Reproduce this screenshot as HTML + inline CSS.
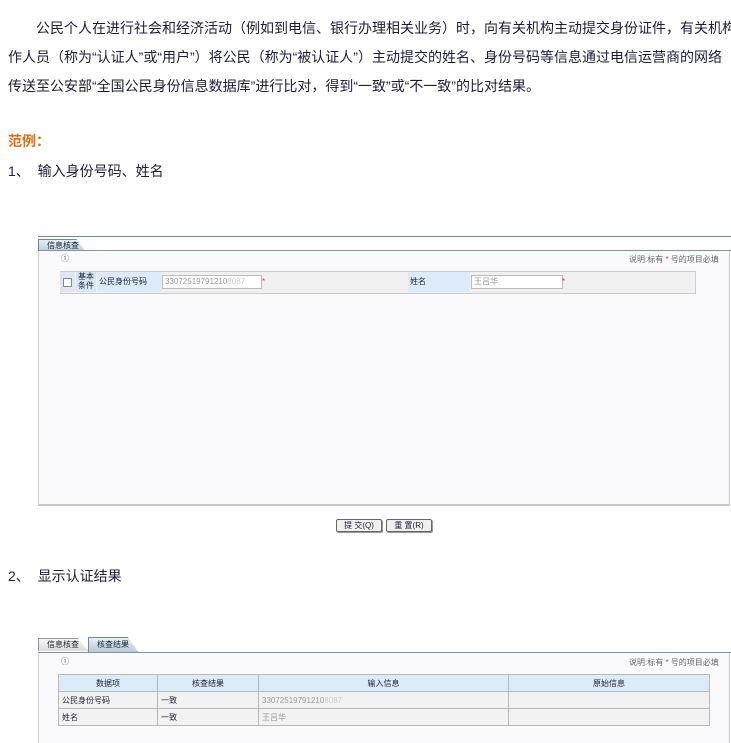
<!DOCTYPE html>
<html><head><meta charset="utf-8"><style>
body{margin:0;width:731px;height:737px;overflow:hidden;background:#fff;font-family:"Liberation Sans","Noto Sans CJK SC",sans-serif;position:relative;color:#1c1c3a}
.abs{position:absolute;white-space:nowrap}
.p{font-size:14px;left:8px}
.tab{position:absolute;height:12px;font-size:8px;line-height:12px;color:#123;border:1px solid #6d8aa0;border-bottom:none;background:linear-gradient(#e8eef3,#bccbd8);padding-left:8px}
.line{position:absolute;height:1px;background:#7a94a8}
.body{position:absolute;background:#fafafc;border:1px solid #ccc;border-top:none;border-bottom:2px solid #c8c8c8}
.s{font-size:8px;color:#555}
table{border-collapse:collapse;font-size:8px}
td{border:1px solid #b8b8b8;height:16px;padding:0 3px}
.btn{position:absolute;top:519px;height:11px;border:1px solid #666;border-radius:2px;background:#f0f0f0;font-size:8px;line-height:11px;text-align:center;box-shadow:1px 1px 0 #999}
</style></head><body>
<div class="abs p" style="top:18px;left:36px">公民个人在进行社会和经济活动（例如到电信、银行办理相关业务）时，向有关机构主动提交身份证件，有关机构</div>
<div class="abs p" style="top:47px">作人员（称为“认证人”或“用户”）将公民（称为“被认证人”）主动提交的姓名、身份号码等信息通过电信运营商的网络</div>
<div class="abs p" style="top:76px">传送至公安部“全国公民身份信息数据库”进行比对，得到“一致”或“不一致”的比对结果。</div>
<div class="abs" style="top:131px;left:8px;font-size:14px;font-weight:bold;color:#e86a10">范例：</div>
<div class="abs p" style="top:161px">1、&nbsp;&nbsp;输入身份号码、姓名</div>

<div class="line" style="top:236px;left:38px;width:693px;background:#6f8898"></div>
<div class="tab" style="top:239px;left:38px;width:38px;clip-path:polygon(0 0,80% 0,100% 100%,0 100%)">信息核查</div>
<div class="line" style="top:250px;left:38px;width:693px"></div>
<div class="body" style="top:251px;left:38px;width:690px;height:253px"></div>
<div class="abs s" style="top:253px;left:61px;color:#4466aa">①</div>
<div class="abs s" style="top:254px;left:629px;color:#666">说明:标有 <span style="color:#e33">*</span> 号的项目必填</div>
<div class="abs" style="top:271px;left:60px;width:634px;height:21px;background:#f0f0f0;border:1px solid #ccc"></div>
<div class="abs" style="top:272px;left:60px;width:15px;height:20px;background:#dde8f4"></div>
<div class="abs" style="top:278px;left:63px;width:7px;height:7px;border:1px solid #888;background:#fff"></div>
<div class="abs" style="top:272px;left:76px;width:20px;height:20px;background:#d8e6f4;font-size:8px;line-height:9px;text-align:center">基本<br>条件</div>
<div class="abs" style="top:272px;left:97px;width:62px;height:20px;background:#dcebfa;font-size:8px;line-height:20px;padding-left:2px">公民身份号码</div>
<div class="abs" style="top:275px;left:162px;width:96px;height:12px;background:#fff;border:1px solid #bbb;font-size:8px;line-height:12px;color:#999;padding-left:2px">33072519791210<span style="color:#ccc">8087</span></div>
<div class="abs" style="top:277px;left:262px;font-size:8px;color:#e33">*</div>
<div class="abs" style="top:272px;left:408px;width:60px;height:20px;background:#dcebfa;font-size:8px;line-height:20px;padding-left:2px">姓名</div>
<div class="abs" style="top:275px;left:471px;width:88px;height:12px;background:#fff;border:1px solid #bbb;font-size:8px;line-height:12px;color:#999;padding-left:2px">王吕华</div>
<div class="abs" style="top:277px;left:562px;font-size:8px;color:#e33">*</div>

<div class="btn" style="left:336px;width:44px">提 交(Q)</div>
<div class="btn" style="left:386px;width:44px">重 置(R)</div>

<div class="abs p" style="top:566px">2、&nbsp;&nbsp;显示认证结果</div>

<div class="tab" style="top:638px;left:38px;width:40px;clip-path:polygon(0 0,80% 0,100% 100%,0 100%);background:linear-gradient(#f4f4f4,#dcdcdc);border-color:#999">信息核查</div>
<div class="tab" style="top:637px;left:88px;width:40px;height:14px;clip-path:polygon(0 0,80% 0,100% 100%,0 100%);line-height:14px">核查结果</div>
<div class="line" style="top:652px;left:38px;width:693px"></div>
<div class="body" style="top:653px;left:38px;width:690px;height:90px;border-bottom:none"></div>
<div class="abs s" style="top:656px;left:61px;color:#4466aa">①</div>
<div class="abs s" style="top:657px;left:629px;color:#666">说明:标有 <span style="color:#e33">*</span> 号的项目必填</div>
<table class="abs" style="top:674px;left:58px;width:652px">
<tr style="background:#dcebfa;text-align:center"><td style="width:92px">数据项</td><td style="width:94px">核查结果</td><td style="width:243px">输入信息</td><td>原始信息</td></tr>
<tr style="background:#f2f2f2"><td>公民身份号码</td><td>一致</td><td style="color:#999">33072519791210<span style="color:#ccc">8087</span></td><td></td></tr>
<tr style="background:#f2f2f2"><td>姓名</td><td>一致</td><td style="color:#999">王吕华</td><td></td></tr>
</table>
</body></html>
